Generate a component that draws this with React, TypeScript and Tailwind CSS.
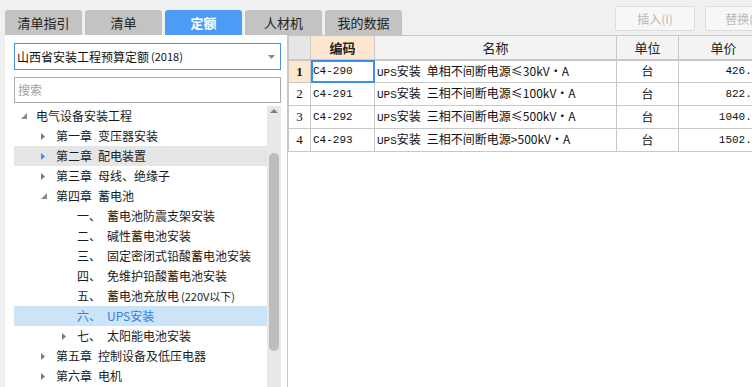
import React from "react";

const cjk = { fontFamily: '"Noto Sans CJK SC", "Noto Sans", sans-serif' };
const cell = { fontFamily: '"Liberation Mono", "Noto Sans CJK SC", monospace' };

type Node = {
  level: 0 | 1 | 2;
  arrow?: "open" | "closed";
  num?: string;
  label: string;
  extra?: string;
  hover?: boolean;
  selected?: boolean;
};

const tree: Node[] = [
  { level: 0, arrow: "open", label: "电气设备安装工程" },
  { level: 1, arrow: "closed", num: "第一章", label: "变压器安装" },
  { level: 1, arrow: "closed", num: "第二章", label: "配电装置", hover: true },
  { level: 1, arrow: "closed", num: "第三章", label: "母线、绝缘子" },
  { level: 1, arrow: "open", num: "第四章", label: "蓄电池" },
  { level: 2, num: "一、", label: "蓄电池防震支架安装" },
  { level: 2, num: "二、", label: "碱性蓄电池安装" },
  { level: 2, num: "三、", label: "固定密闭式铅酸蓄电池安装" },
  { level: 2, num: "四、", label: "免维护铅酸蓄电池安装" },
  { level: 2, num: "五、", label: "蓄电池充放电", extra: "(220V以下)" },
  { level: 2, num: "六、", label: "UPS安装", selected: true },
  { level: 2, arrow: "closed", num: "七、", label: "太阳能电池安装" },
  { level: 1, arrow: "closed", num: "第五章", label: "控制设备及低压电器" },
  { level: 1, arrow: "closed", num: "第六章", label: "电机" },
];

const rows = [
  { code: "C4-290", name: "单相不间断电源≤30kV·A", price: "426.95" },
  { code: "C4-291", name: "三相不间断电源≤100kV·A", price: "822.37" },
  { code: "C4-292", name: "三相不间断电源≤500kV·A", price: "1040.62" },
  { code: "C4-293", name: "三相不间断电源>500kV·A", price: "1502.18" },
];

const tabs = ["清单指引", "清单", "定额", "人材机", "我的数据"];

function Arrow({ kind, blue }: { kind?: "open" | "closed"; blue?: boolean }) {
  if (kind === "open")
    return (
      <svg width="6" height="6" viewBox="0 0 6 6">
        <polygon points="6,0 6,6 0,6" fill="#8a8a8a" />
      </svg>
    );
  if (kind === "closed")
    return (
      <svg width="4" height="7" viewBox="0 0 4 7">
        <polygon points="0,0 4,3.5 0,7" fill={blue ? "#3d8ef7" : "#7a7a7a"} />
      </svg>
    );
  return null;
}

function TreeRow({ n }: { n: Node }) {
  const pad = n.level === 0 ? "pl-[7px]" : n.level === 1 ? "pl-[27px]" : "pl-[48px]";
  const bg = n.selected ? "bg-[#cce4f7]" : n.hover ? "bg-[#e5e5e5]" : "";
  const color = n.selected ? "text-[#2f7fe0]" : "text-[#1a1a1a]";
  return (
    <div className={`h-[20px] flex items-center text-[12px] whitespace-nowrap ${pad} ${bg} ${color}`}>
      <span className="w-[15px] flex items-center">
        <Arrow kind={n.arrow} blue={n.hover} />
      </span>
      {n.level === 2 && <span className="w-[30px]">{n.num}</span>}
      {n.level === 1 && <span className="mr-[6px]">{n.num}</span>}
      <span>{n.label}</span>
      {n.extra && <span className="ml-[2px] text-[11px]">{n.extra}</span>}
    </div>
  );
}

export default function App() {
  return (
    <div className="w-[752px] h-[387px] bg-[#f0f0f0] overflow-hidden flex flex-col" style={cjk}>
      {/* TOP BAR */}
      <div className="h-[35px] flex shrink-0">
        <div className="flex items-end gap-[3px] pl-[5px]">
          {tabs.map((t) => (
            <div
              key={t}
              className={`w-[77px] h-[25px] rounded-t-[3px] flex items-center justify-center text-[13px] ${
                t === "定额" ? "bg-[#4a9cf6] text-white font-bold" : "bg-[#c3c3c3] text-[#222]"
              }`}
            >
              {t}
            </div>
          ))}
        </div>
        <div className="flex gap-[10px] pt-[6px] ml-[213px]">
          <div className="w-[80px] h-[25px] border border-[#dcdcdc] bg-[#f7f7f7] rounded-[2px] flex items-center justify-center text-[12px] text-[#b8b8b8]">
            插入(I)
          </div>
          <div className="w-[80px] h-[25px] border border-[#dcdcdc] bg-[#f7f7f7] rounded-[2px] flex items-center justify-center text-[12px] text-[#b8b8b8]">
            替换(R)
          </div>
        </div>
      </div>

      <div className="flex flex-1 min-h-0">
        {/* LEFT PANEL */}
        <div className="ml-[5px] w-[282px] bg-white flex flex-col pl-[9px] pr-[6px] pt-[8px]">
          <div className="h-[27px] border border-[#4a90e8] flex items-center pl-[2px] pr-[5px] text-[12px] text-[#111]">
            <span>山西省安装工程预算定额</span>
            <span className="ml-[2px] text-[11px]">(2018)</span>
            <svg className="ml-auto" width="7" height="4" viewBox="0 0 7 4">
              <polygon points="0,0 7,0 3.5,4" fill="#8a8a8a" />
            </svg>
          </div>
          <div className="h-[26px] mt-[7px] border border-[#a9a9a9] flex items-center pl-[3px] text-[12px] text-[#a0a0a0]">
            搜索
          </div>
          <div className="flex flex-1 min-h-0 mt-[3px] overflow-hidden">
            <div className="flex-1">
              {tree.map((n, i) => (
                <TreeRow key={i} n={n} />
              ))}
            </div>
            {/* SCROLLBAR */}
            <div className="w-[14px] bg-[#e8e8e8] flex flex-col items-center">
              <svg className="mt-[3px]" width="8" height="4" viewBox="0 0 8 4">
                <polygon points="0,4 8,4 4,0" fill="#808080" />
              </svg>
              <div className="w-[10px] h-[198px] mt-[40px] rounded-full bg-[#bdbdbd]" />
            </div>
          </div>
        </div>

        {/* TABLE */}
        <div className="flex-1 bg-white border-l border-[#c8c8c8] overflow-hidden">
          <table className="table-fixed border-collapse w-[480px] text-[12px]">
            <colgroup>
              <col className="w-[22px]" />
              <col className="w-[64px]" />
              <col className="w-[242px]" />
              <col className="w-[62px]" />
              <col className="w-[90px]" />
            </colgroup>
            <thead>
              <tr className="h-[24px] text-[13px] text-[#222]">
                <th className="bg-[#e6e6e6] border border-[#c8c8c8] border-b-2 font-normal" />
                <th className="bg-[#fde8cf] border border-[#c8c8c8] border-b-2 font-bold">编码</th>
                <th className="bg-[#f3f3f3] border border-[#c8c8c8] border-b-2 font-normal">名称</th>
                <th className="bg-[#f3f3f3] border border-[#c8c8c8] border-b-2 font-normal">单位</th>
                <th className="bg-[#f3f3f3] border border-[#c8c8c8] border-b-2 font-normal">单价</th>
              </tr>
            </thead>
            <tbody>
              {rows.map((r, i) => (
                <tr key={r.code} className="h-[23px] text-[#111]">
                  <td
                    className={`border border-[#c8c8c8] text-center text-[13px] ${
                      i === 0 ? "bg-[#fde8cf] font-bold" : ""
                    }`}
                    style={{ fontFamily: '"Liberation Serif", serif' }}
                  >
                    {i + 1}
                  </td>
                  <td
                    className={`border border-[#c8c8c8] pl-[2px] text-[11px] ${
                      i === 0 ? "outline-2 outline-[#3d8ef0] -outline-offset-2" : ""
                    }`}
                    style={cell}
                  >
                    {r.code}
                  </td>
                  <td className="border border-[#c8c8c8] pl-[2px] whitespace-nowrap overflow-hidden" style={cjk}>
                    <span className="text-[11px]" style={cell}>UPS</span>
                    <span className="mr-[6px]">安装</span>
                    {r.name}
                  </td>
                  <td className="border border-[#c8c8c8] text-center">台</td>
                  <td className="border border-[#c8c8c8] text-right pr-[3px] text-[11px]" style={cell}>
                    {r.price}
                  </td>
                </tr>
              ))}
            </tbody>
          </table>
        </div>
      </div>
    </div>
  );
}
